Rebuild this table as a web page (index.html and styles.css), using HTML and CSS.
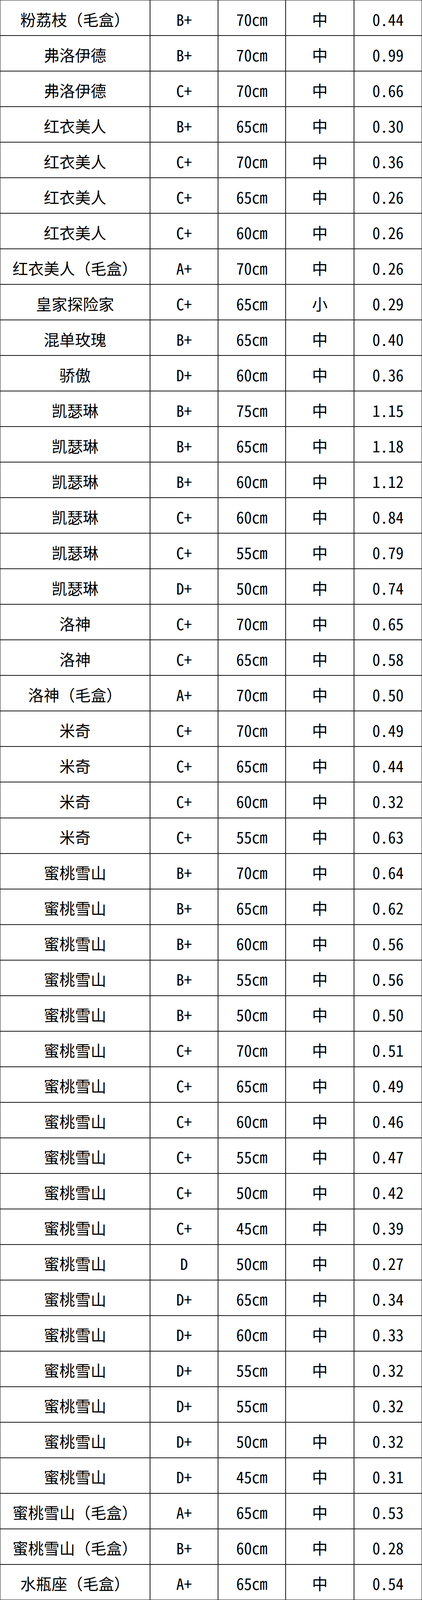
FILE: index.html
```
<!DOCTYPE html>
<html lang="zh-CN">
<head>
<meta charset="utf-8">
<title>价格表</title>
<link rel="stylesheet" href="styles.css">
</head>
<body>
<div class="sheet">
<div class="c">粉荔枝（毛盒）</div><div class="c">B+</div><div class="c">70cm</div><div class="c">中</div><div class="c">0.44</div>
<div class="c">弗洛伊德</div><div class="c">B+</div><div class="c">70cm</div><div class="c">中</div><div class="c">0.99</div>
<div class="c">弗洛伊德</div><div class="c">C+</div><div class="c">70cm</div><div class="c">中</div><div class="c">0.66</div>
<div class="c">红衣美人</div><div class="c">B+</div><div class="c">65cm</div><div class="c">中</div><div class="c">0.30</div>
<div class="c">红衣美人</div><div class="c">C+</div><div class="c">70cm</div><div class="c">中</div><div class="c">0.36</div>
<div class="c">红衣美人</div><div class="c">C+</div><div class="c">65cm</div><div class="c">中</div><div class="c">0.26</div>
<div class="c">红衣美人</div><div class="c">C+</div><div class="c">60cm</div><div class="c">中</div><div class="c">0.26</div>
<div class="c">红衣美人（毛盒）</div><div class="c">A+</div><div class="c">70cm</div><div class="c">中</div><div class="c">0.26</div>
<div class="c">皇家探险家</div><div class="c">C+</div><div class="c">65cm</div><div class="c">小</div><div class="c">0.29</div>
<div class="c">混单玫瑰</div><div class="c">B+</div><div class="c">65cm</div><div class="c">中</div><div class="c">0.40</div>
<div class="c">骄傲</div><div class="c">D+</div><div class="c">60cm</div><div class="c">中</div><div class="c">0.36</div>
<div class="c">凯瑟琳</div><div class="c">B+</div><div class="c">75cm</div><div class="c">中</div><div class="c">1.15</div>
<div class="c">凯瑟琳</div><div class="c">B+</div><div class="c">65cm</div><div class="c">中</div><div class="c">1.18</div>
<div class="c">凯瑟琳</div><div class="c">B+</div><div class="c">60cm</div><div class="c">中</div><div class="c">1.12</div>
<div class="c">凯瑟琳</div><div class="c">C+</div><div class="c">60cm</div><div class="c">中</div><div class="c">0.84</div>
<div class="c">凯瑟琳</div><div class="c">C+</div><div class="c">55cm</div><div class="c">中</div><div class="c">0.79</div>
<div class="c">凯瑟琳</div><div class="c">D+</div><div class="c">50cm</div><div class="c">中</div><div class="c">0.74</div>
<div class="c">洛神</div><div class="c">C+</div><div class="c">70cm</div><div class="c">中</div><div class="c">0.65</div>
<div class="c">洛神</div><div class="c">C+</div><div class="c">65cm</div><div class="c">中</div><div class="c">0.58</div>
<div class="c">洛神（毛盒）</div><div class="c">A+</div><div class="c">70cm</div><div class="c">中</div><div class="c">0.50</div>
<div class="c">米奇</div><div class="c">C+</div><div class="c">70cm</div><div class="c">中</div><div class="c">0.49</div>
<div class="c">米奇</div><div class="c">C+</div><div class="c">65cm</div><div class="c">中</div><div class="c">0.44</div>
<div class="c">米奇</div><div class="c">C+</div><div class="c">60cm</div><div class="c">中</div><div class="c">0.32</div>
<div class="c">米奇</div><div class="c">C+</div><div class="c">55cm</div><div class="c">中</div><div class="c">0.63</div>
<div class="c">蜜桃雪山</div><div class="c">B+</div><div class="c">70cm</div><div class="c">中</div><div class="c">0.64</div>
<div class="c">蜜桃雪山</div><div class="c">B+</div><div class="c">65cm</div><div class="c">中</div><div class="c">0.62</div>
<div class="c">蜜桃雪山</div><div class="c">B+</div><div class="c">60cm</div><div class="c">中</div><div class="c">0.56</div>
<div class="c">蜜桃雪山</div><div class="c">B+</div><div class="c">55cm</div><div class="c">中</div><div class="c">0.56</div>
<div class="c">蜜桃雪山</div><div class="c">B+</div><div class="c">50cm</div><div class="c">中</div><div class="c">0.50</div>
<div class="c">蜜桃雪山</div><div class="c">C+</div><div class="c">70cm</div><div class="c">中</div><div class="c">0.51</div>
<div class="c">蜜桃雪山</div><div class="c">C+</div><div class="c">65cm</div><div class="c">中</div><div class="c">0.49</div>
<div class="c">蜜桃雪山</div><div class="c">C+</div><div class="c">60cm</div><div class="c">中</div><div class="c">0.46</div>
<div class="c">蜜桃雪山</div><div class="c">C+</div><div class="c">55cm</div><div class="c">中</div><div class="c">0.47</div>
<div class="c">蜜桃雪山</div><div class="c">C+</div><div class="c">50cm</div><div class="c">中</div><div class="c">0.42</div>
<div class="c">蜜桃雪山</div><div class="c">C+</div><div class="c">45cm</div><div class="c">中</div><div class="c">0.39</div>
<div class="c">蜜桃雪山</div><div class="c">D</div><div class="c">50cm</div><div class="c">中</div><div class="c">0.27</div>
<div class="c">蜜桃雪山</div><div class="c">D+</div><div class="c">65cm</div><div class="c">中</div><div class="c">0.34</div>
<div class="c">蜜桃雪山</div><div class="c">D+</div><div class="c">60cm</div><div class="c">中</div><div class="c">0.33</div>
<div class="c">蜜桃雪山</div><div class="c">D+</div><div class="c">55cm</div><div class="c">中</div><div class="c">0.32</div>
<div class="c">蜜桃雪山</div><div class="c">D+</div><div class="c">55cm</div><div class="c"></div><div class="c">0.32</div>
<div class="c">蜜桃雪山</div><div class="c">D+</div><div class="c">50cm</div><div class="c">中</div><div class="c">0.32</div>
<div class="c">蜜桃雪山</div><div class="c">D+</div><div class="c">45cm</div><div class="c">中</div><div class="c">0.31</div>
<div class="c">蜜桃雪山（毛盒）</div><div class="c">A+</div><div class="c">65cm</div><div class="c">中</div><div class="c">0.53</div>
<div class="c">蜜桃雪山（毛盒）</div><div class="c">B+</div><div class="c">60cm</div><div class="c">中</div><div class="c">0.28</div>
<div class="c">水瓶座（毛盒）</div><div class="c">A+</div><div class="c">65cm</div><div class="c">中</div><div class="c">0.54</div>
</div>
</body>
</html>
```

FILE: styles.css
```
html, body {
  margin: 0;
  padding: 0;
  background: #ffffff;
  height: 100%;
  overflow: hidden;
}

.sheet {
  box-sizing: border-box;
  width: 100vw;
  height: 100vh;
  display: grid;
  grid-template-columns: minmax(0, 382fr) minmax(0, 172fr) minmax(0, 171fr) minmax(0, 173fr) minmax(0, 172fr);
  grid-template-rows: repeat(45, minmax(0, 1fr));
  gap: 2px;
  padding: 1px;
  background: #141414;
  font-family: "Noto Sans Mono CJK SC", "Noto Sans CJK SC", sans-serif;
  font-size: 40px;
  color: #000000;
  overflow: hidden;
}

.c {
  box-sizing: border-box;
  min-width: 0;
  min-height: 0;
  overflow: hidden;
  background: #ffffff;
  display: flex;
  align-items: center;
  justify-content: center;
  line-height: 40px;
  padding-top: 6px;
  white-space: nowrap;
}
```
